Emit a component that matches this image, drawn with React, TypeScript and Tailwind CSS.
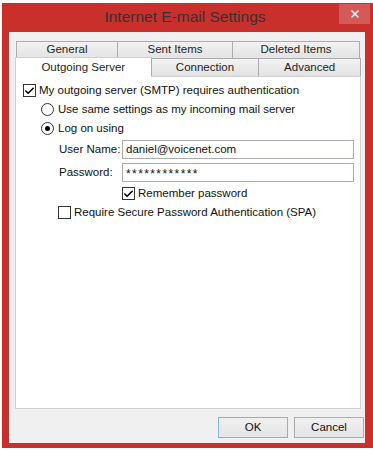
import { Check, X } from "lucide-react";

const font = "font-['Liberation_Sans','Segoe_UI',sans-serif]";

function CheckBox({ checked }: { checked?: boolean }) {
  return (
    <div className="flex h-[13px] w-[13px] shrink-0 items-center justify-center border border-[#333] bg-white">
      {checked && <Check className="h-[12px] w-[12px] text-black" strokeWidth={3.5} />}
    </div>
  );
}

function Radio({ checked }: { checked?: boolean }) {
  return (
    <div className="flex h-[13px] w-[13px] shrink-0 items-center justify-center rounded-full border border-[#333] bg-white">
      {checked && <div className="h-[5px] w-[5px] rounded-full bg-black" />}
    </div>
  );
}

function Tab({ label, w, h = "h-[17px]" }: { label: string; w: string; h?: string }) {
  return (
    <div
      className={`${w} ${h} -ml-px flex items-center justify-center border border-b-0 border-[#acacac] bg-gradient-to-b from-[#f2f2f2] to-[#e3e3e3] text-[11.5px] text-[#1e1e1e] first:ml-0`}
    >
      {label}
    </div>
  );
}

export default function App() {
  return (
    <div className={`h-[450px] w-[373px] overflow-hidden bg-white ${font}`}>
      <div className="ml-[2px] mt-[3px] flex h-[445px] w-[371px] flex-col bg-[#c9302c] pb-[5px] pl-[7px] pr-[8px]">
        {/* title bar */}
        <div className="relative flex h-[29px] shrink-0 items-center justify-center">
          <span className="-ml-[4px] mb-[2px] text-[15.5px] text-[#333]">Internet E-mail Settings</span>
          <div className="absolute right-[-5px] top-[1px] flex h-[20px] w-[31px] items-center justify-center bg-[#d45a57]">
            <X className="h-[12px] w-[12px] text-white" strokeWidth={3} />
          </div>
        </div>

        {/* client area */}
        <div className="flex flex-1 flex-col bg-[#f0f0f0] pl-[6px] pt-[9px]">
          <div className="w-[346px]">
            <div className="ml-px flex">
              <Tab label="General" w="w-[102px]" />
              <Tab label="Sent Items" w="w-[116px]" />
              <Tab label="Deleted Items" w="w-[128px]" />
            </div>
            <div className="relative z-10 flex h-[18px] items-start">
              <div className="-mt-px flex h-[20px] w-[137px] items-start justify-center border border-b-0 border-[#d0d0d0] bg-white pt-[1px] text-[11.5px] text-[#1e1e1e]">
                Outgoing Server
              </div>
              <Tab label="Connection" w="w-[109px]" h="h-[18px]" />
              <Tab label="Advanced" w="w-[103px]" h="h-[18px]" />
            </div>
            <div className="h-[333px] border border-[#d0d0d0] bg-white pl-[7px] pt-[4px] text-[11.5px] text-[#111]">
              <div className="flex h-[19px] items-center gap-[3px]">
                <CheckBox checked />
                <span>My outgoing server (SMTP) requires authentication</span>
              </div>
              <div className="ml-[18px] flex h-[19px] items-center gap-[4px]">
                <Radio />
                <span>Use same settings as my incoming mail server</span>
              </div>
              <div className="ml-[18px] flex h-[19px] items-center gap-[4px]">
                <Radio checked />
                <span>Log on using</span>
              </div>
              <div className="ml-[36px] mt-[2px] flex h-[19px] items-center">
                <span className="w-[63px] shrink-0 whitespace-nowrap">User Name:</span>
                <div className="flex h-[19px] w-[232px] items-center border border-[#abadb3] bg-white px-[3px]">
                  daniel@voicenet.com
                </div>
              </div>
              <div className="ml-[36px] mt-[4px] flex h-[19px] items-center">
                <span className="w-[63px] shrink-0 whitespace-nowrap">Password:</span>
                <div className="flex h-[19px] w-[232px] items-center border border-[#abadb3] bg-white px-[3px] pt-[2px] text-[12px] tracking-[1.4px]">
                  ************
                </div>
              </div>
              <div className="ml-[99px] mt-[2px] flex h-[19px] items-center gap-[3px]">
                <CheckBox checked />
                <span>Remember password</span>
              </div>
              <div className="ml-[35px] flex h-[19px] items-center gap-[3px]">
                <CheckBox />
                <span>Require Secure Password Authentication (SPA)</span>
              </div>
            </div>
          </div>

          {/* buttons */}
          <div className="mt-[8px] flex gap-[6px] pl-[203px]">
            <button className="h-[21px] w-[70px] border border-[#7eb4ea] bg-gradient-to-b from-[#f0f0f0] to-[#e5e5e5] text-[11.5px] text-[#111]">
              OK
            </button>
            <button className="h-[21px] w-[70px] border border-[#acacac] bg-gradient-to-b from-[#f0f0f0] to-[#e5e5e5] text-[11.5px] text-[#111]">
              Cancel
            </button>
          </div>
        </div>
      </div>
    </div>
  );
}
